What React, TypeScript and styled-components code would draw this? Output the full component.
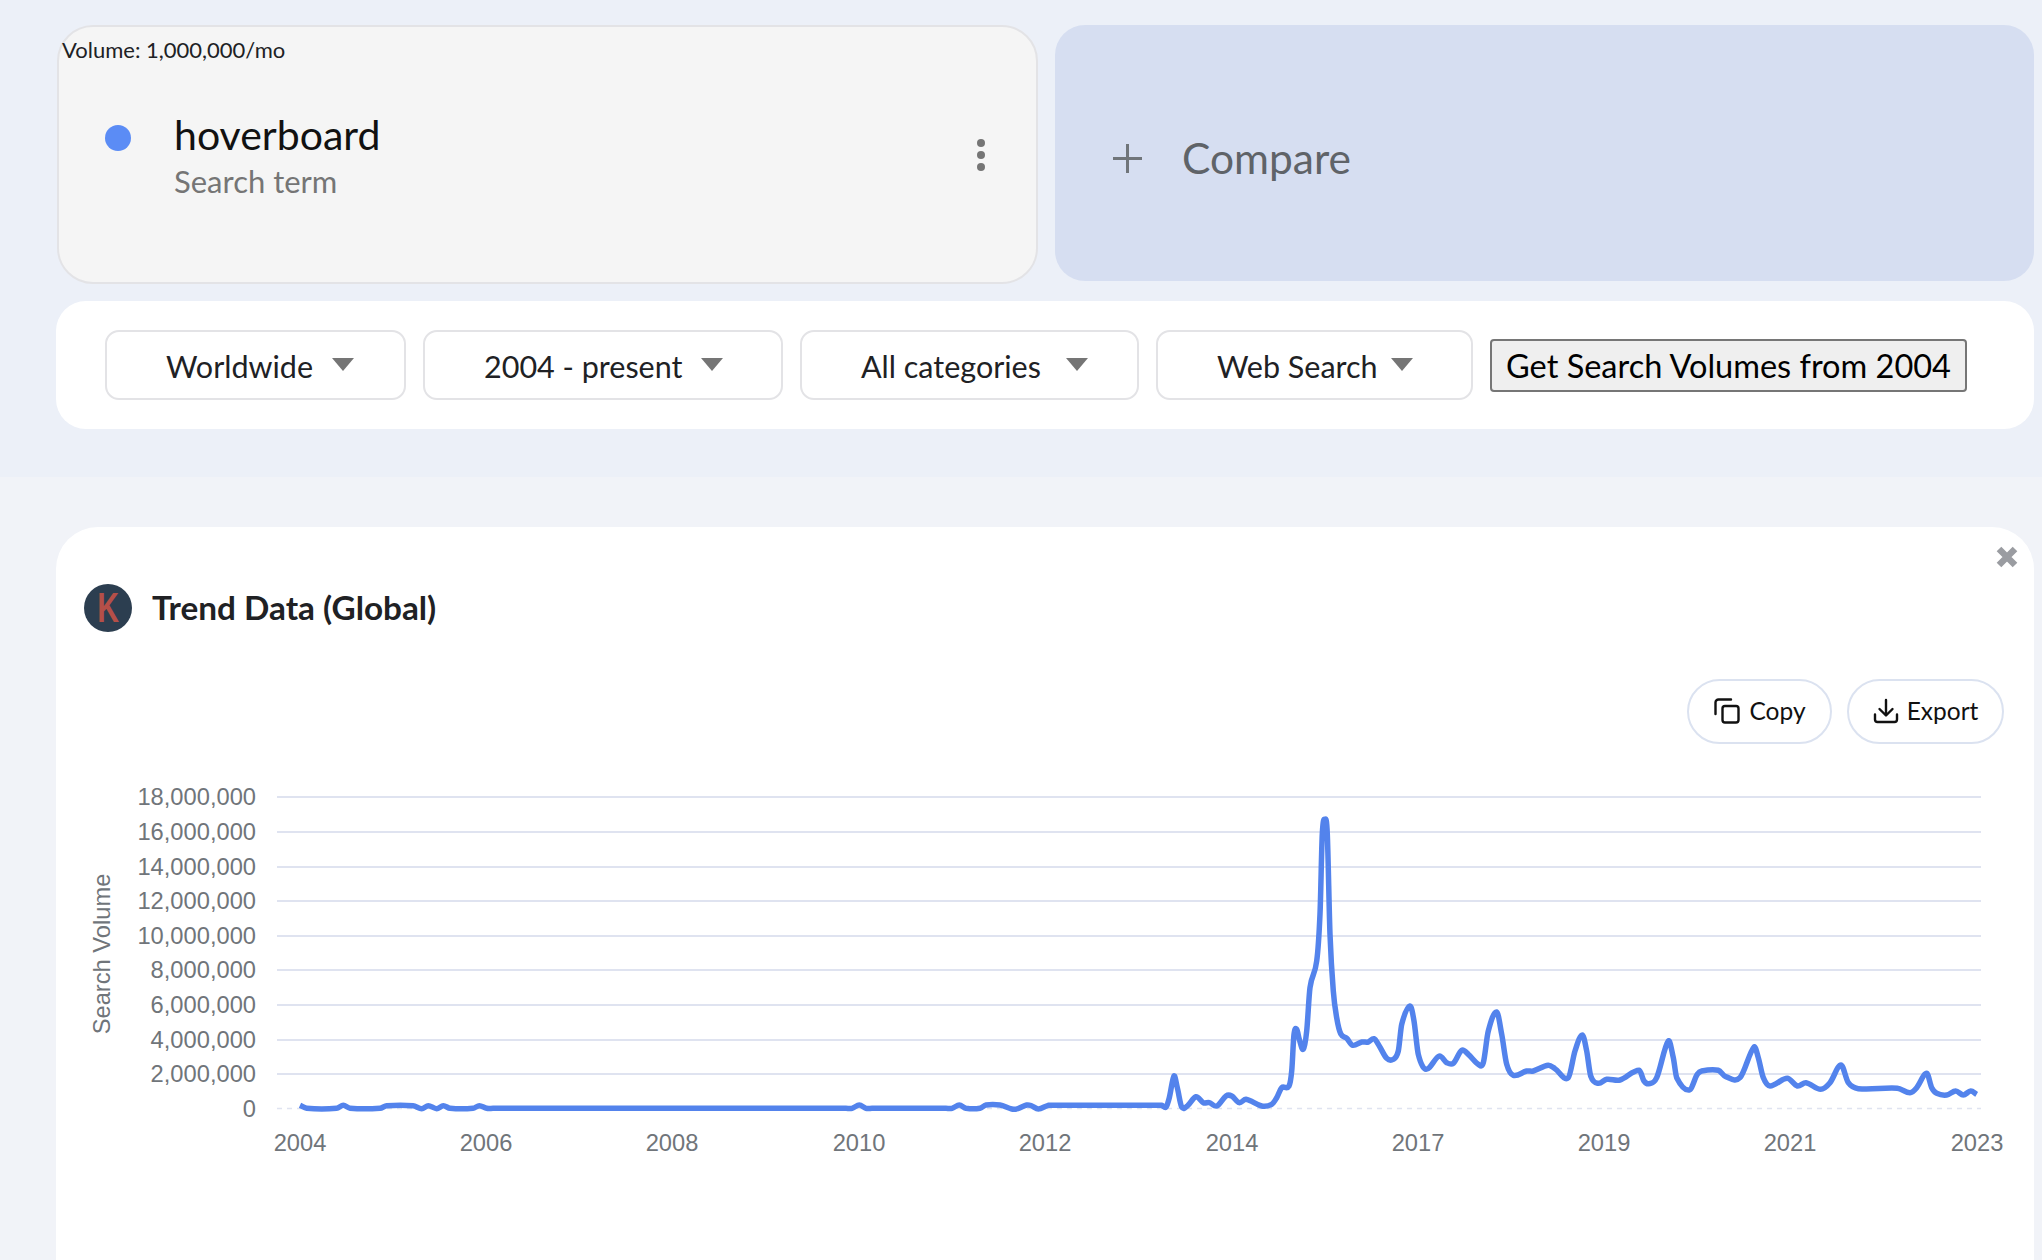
import styled, { createGlobalStyle } from "styled-components";

const GlobalStyle = createGlobalStyle`
  html, body {
    margin: 0;
    padding: 0;
    height: 1260px;
    overflow: hidden;
    background: #f1f3f8;
    font-family: "Lato", "Liberation Sans", sans-serif;
  }
  * { box-sizing: border-box; }
`;

const TopBand = styled.section`
  height: 477px;
  background: #ecf0f8;
  padding: 25px 8px 0 56px;
`;

const CardRow = styled.div`
  display: grid;
  grid-template-columns: 982px 979px;
  gap: 17px;
  align-items: start;
`;

const TermCard = styled.div`
  height: 259px;
  margin-left: 1px;
  background: #f5f5f5;
  border: 2px solid #e3e3e6;
  border-radius: 36px;
  padding: 7px 3px;
`;

const Volume = styled.div`
  font-size: 22px;
  line-height: 32px;
  color: #202124;
`;

const TermRow = styled.div`
  display: flex;
  align-items: flex-start;
  margin: 45px 0 0 43px;
`;

const Dot = styled.span`
  width: 26px;
  height: 26px;
  margin-top: 14px;
  border-radius: 50%;
  background: #5b8cf5;
`;

const TermText = styled.div`
  margin-left: 43px;
  flex: 1;
`;

const TermName = styled.div`
  font-size: 41px;
  line-height: 48px;
  color: #111;
`;

const TermKind = styled.div`
  font-size: 31px;
  line-height: 40px;
  margin-top: 2px;
  color: #757575;
`;

const Kebab = styled.div`
  display: flex;
  flex-direction: column;
  gap: 4px;
  margin: 28px 48px 0 0;

  span {
    width: 8px;
    height: 8px;
    border-radius: 50%;
    background: #757575;
  }
`;

const CompareCard = styled.div`
  height: 256px;
  display: flex;
  align-items: center;
  gap: 40px;
  padding: 8px 0 0 58px;
  background: #d6def1;
  border-radius: 30px;
  color: #5f6368;
  font-size: 42.500px;
`;

const PlusIcon = styled.svg`
  margin-top: 2px;
`;

const FilterPanel = styled.div`
  display: flex;
  align-items: center;
  gap: 17px;
  height: 128px;
  margin-top: 17px;
  padding-left: 49px;
  background: #fff;
  border-radius: 30px;
`;

const Dropdown = styled.div<{ $w: number; $pr: number }>`
  width: ${(p) => p.$w}px;
  height: 70px;
  display: flex;
  align-items: center;
  justify-content: space-between;
  padding: 1px ${(p) => p.$pr}px 0 59px;
  border: 2px solid #e3e3e6;
  border-radius: 14px;
  font-size: 30.500px;
  color: #202124;
`;

const Caret = styled.span`
  width: 0;
  height: 0;
  margin-top: -2px;
  border-left: 11px solid transparent;
  border-right: 11px solid transparent;
  border-top: 13px solid #757575;
`;

const VolumeButton = styled.button`
  width: 477px;
  height: 53px;
  padding: 0;
  background: #efefef;
  border: 2px solid #767676;
  border-radius: 4px;
  font-family: inherit;
  font-size: 32.500px;
  color: #000;
`;

const TrendCard = styled.section`
  position: relative;
  height: 733px;
  margin: 50px 8px 0 56px;
  padding: 56px 30px 0 28px;
  background: #fff;
  border-radius: 42px 42px 0 0;
`;

const CloseButton = styled.svg`
  position: absolute;
  top: 19px;
  right: 16px;
`;

const TitleRow = styled.div`
  display: flex;
  align-items: center;
  gap: 20px;
  margin-top: 1px;
`;

const Avatar = styled.div`
  width: 48px;
  height: 48px;
  display: flex;
  align-items: center;
  justify-content: center;
  border-radius: 50%;
  background: #2c3e50;
`;

const AvatarLetter = styled.span`
  color: #b54f48;
  font-size: 42px;
  line-height: 48px;
  font-weight: 700;
  font-family: "Liberation Sans", sans-serif;
  transform: scaleX(0.72);
`;

const Title = styled.h2`
  margin: -2px 0 0;
  font-size: 33.300px;
  line-height: 48px;
  font-weight: 700;
  color: #202124;
`;

const ActionRow = styled.div`
  display: flex;
  justify-content: flex-end;
  gap: 15px;
  margin-top: 46px;
  padding-top: 1px;
`;

const ActionButton = styled.button<{ $w: number; $gap: number }>`
  width: ${(p) => p.$w}px;
  height: 65px;
  display: flex;
  align-items: center;
  justify-content: center;
  gap: ${(p) => p.$gap}px;
  padding: 0 0 2px;
  background: #fff;
  border: 2px solid #dbe2f0;
  border-radius: 33px;
  font-family: inherit;
  font-size: 24.500px;
  color: #111;
`;

const ChartSvg = styled.svg`
  display: block;
  margin: 0 0 0 -28px;
  font-family: "Liberation Sans", sans-serif;
  font-size: 23.700px;
  fill: #70757a;
`;

// chart coordinates are page pixels, the svg starts at the card's left edge
const CHART_X0 = 56;
const CHART_Y0 = 743;

const yTicks = [
  ["18,000,000", 796],
  ["16,000,000", 831],
  ["14,000,000", 866],
  ["12,000,000", 900],
  ["10,000,000", 935],
  ["8,000,000", 969],
  ["6,000,000", 1004],
  ["4,000,000", 1039],
  ["2,000,000", 1073],
] as const;

const xTicks = [
  ["2004", 300],
  ["2006", 486],
  ["2008", 672],
  ["2010", 859],
  ["2012", 1045],
  ["2014", 1232],
  ["2017", 1418],
  ["2019", 1604],
  ["2021", 1790],
  ["2023", 1977],
] as const;

const trend: [number, number][] = [
  [300, 1104.3], [306.7, 1107.3], [336.7, 1107.3], [343.3, 1104.3], [350, 1107.3], [380, 1107.3],
  [386.7, 1104.7], [413, 1104.7], [421.7, 1107.7], [428.3, 1104.7], [436.7, 1107.7], [443.3, 1104.7],
  [450, 1107.3], [473, 1107.3], [479.3, 1104.7], [486.7, 1107.3], [493, 1107.3], [846, 1107.3], [852, 1107.3], [859.3, 1104],
  [866, 1107.3], [872, 1107.3], [946, 1107.3], [952, 1107.3], [959.3, 1104], [966, 1107.3], [980, 1107.3], [986, 1104], [1000, 1104],
  [1011.7, 1108], [1018, 1107.6], [1026.7, 1104], [1031, 1104.5], [1038.3, 1108], [1048.3, 1104.3], [1054, 1104.3], [1156, 1104.3], [1161.7, 1104.3],
  [1166, 1106], [1169.3, 1096.7], [1174, 1075], [1177.3, 1086.7], [1181.7, 1106], [1187.3, 1105],
  [1196, 1095.7], [1203.3, 1101.7], [1209.3, 1101.7], [1216.7, 1105], [1226, 1095], [1231.7, 1095],
  [1239.3, 1101.7], [1246, 1098.3], [1261.7, 1105], [1271.7, 1103.3], [1276.7, 1096.7], [1281.7, 1086.7],
  [1289, 1085], [1291.7, 1070], [1294, 1033.3], [1296.7, 1028.3], [1299.3, 1038.3], [1303.3, 1048.3],
  [1306.7, 1030], [1310, 986.7], [1316.7, 960], [1320, 913], [1322.3, 833], [1325, 818.3], [1327.3, 833],
  [1330, 933.3], [1333.3, 990], [1336.7, 1016.7], [1340.7, 1032.7], [1346.7, 1037.3], [1352.7, 1044.3],
  [1361.7, 1041], [1368.3, 1041], [1374, 1037.7], [1379.3, 1045], [1386.7, 1057.3], [1393.3, 1058.3],
  [1398.3, 1050], [1401.7, 1023.3], [1410, 1005], [1414, 1020], [1418.3, 1053.3], [1426, 1068.3],
  [1439.3, 1055], [1446.7, 1061.7], [1453.3, 1062.3], [1461.7, 1049.3], [1468.3, 1053.3], [1478.3, 1063.3],
  [1483.3, 1061.7], [1488.3, 1030], [1496.7, 1011], [1501.7, 1033.3], [1506.7, 1063.3], [1513.3, 1074.3],
  [1526.7, 1070], [1533.3, 1070], [1548.3, 1064.3], [1555, 1067.7], [1568.3, 1076.7], [1575, 1050],
  [1582.3, 1034], [1586.7, 1050], [1590.7, 1075], [1598.3, 1082.3], [1606.7, 1078.3], [1620, 1079],
  [1639.3, 1069.3], [1644, 1080], [1649.3, 1082.7], [1656.7, 1076.7], [1668.3, 1040], [1673.3, 1056.7],
  [1676.7, 1076.7], [1689.3, 1089], [1697.3, 1073.3], [1701.7, 1070], [1718.3, 1069.3], [1725.7, 1075.7],
  [1740, 1076.7], [1754, 1046], [1758.3, 1056.7], [1763.3, 1076.7], [1770, 1085], [1787.3, 1077.3],
  [1797.3, 1085], [1806, 1081.7], [1820.7, 1088.3], [1830, 1081.7], [1841, 1064], [1848.3, 1081.7],
  [1858.3, 1087.7], [1897.3, 1087.3], [1910, 1091.7], [1916.7, 1086.7], [1926.7, 1072.3], [1931.7, 1086.7],
  [1936.7, 1092.3], [1946.7, 1094], [1955.7, 1090], [1963.3, 1094], [1970.7, 1090], [1976.7, 1093.3],
];

// smooth curve through the traced points, x control points kept inside each segment
const smoothPath = (pts: [number, number][]) => {
  const slope = (i: number) => {
    const a = pts[Math.max(i - 1, 0)];
    const b = pts[Math.min(i + 1, pts.length - 1)];
    return (b[1] - a[1]) / (b[0] - a[0]);
  };
  let d = `M${pts[0][0]} ${pts[0][1]}`;
  for (let i = 0; i < pts.length - 1; i++) {
    const [x1, y1] = pts[i];
    const [x2, y2] = pts[i + 1];
    const dx = (x2 - x1) / 3;
    d += `C${(x1 + dx).toFixed(1)} ${(y1 + slope(i) * dx).toFixed(1)} ${(x2 - dx).toFixed(1)} ${(y2 - slope(i + 1) * dx).toFixed(1)} ${x2} ${y2}`;
  }
  return d;
};

const TrendChart = () => (
  <ChartSvg
    width={1978}
    height={480}
    viewBox={`${CHART_X0} ${CHART_Y0} 1978 480`}
  >
    {yTicks.map(([label, y]) => (
      <g key={label}>
        <line x1={277} x2={1981} y1={y} y2={y} stroke="#dfe3f0" strokeWidth={2} />
        <text x={256} y={y + 8} textAnchor="end">{label}</text>
      </g>
    ))}
    <line x1={277} x2={1981} y1={1107.5} y2={1107.5} stroke="#dfe3f0" strokeWidth={1.5} strokeDasharray="5 5" />
    <text x={256} y={1116} textAnchor="end">0</text>
    <text transform="translate(110 953) rotate(-90)" textAnchor="middle">Search Volume</text>
    {xTicks.map(([label, x]) => (
      <text key={label} x={x} y={1150} textAnchor="middle">{label}</text>
    ))}
    <path d={smoothPath(trend)} fill="none" stroke="#5383ec" strokeWidth={5.500} strokeLinejoin="round" />
  </ChartSvg>
);

const CopyIcon = () => (
  <svg width="28" height="28" viewBox="0 0 28 28" fill="none" stroke="#111" strokeWidth="2.400" strokeLinecap="round" strokeLinejoin="round">
    <rect x="9.500" y="9" width="16" height="16.500" rx="2.500" />
    <path d="M18 2.500H5.500a3 3 0 0 0-3 3V17" />
  </svg>
);

const ExportIcon = () => (
  <svg width="26" height="26" viewBox="0 0 26 26" fill="none" stroke="#111" strokeWidth="2.400" strokeLinecap="round" strokeLinejoin="round">
    <path d="M13 2v15M6.500 11l6.500 6.500L19.500 11" />
    <path d="M2 16.500v5a2.500 2.500 0 0 0 2.500 2.500h17a2.500 2.500 0 0 0 2.500-2.500v-5" />
  </svg>
);

const App = () => (
  <>
    <GlobalStyle />
    <TopBand>
      <CardRow>
        <TermCard>
          <Volume>Volume: 1,000,000/mo</Volume>
          <TermRow>
            <Dot />
            <TermText>
              <TermName>hoverboard</TermName>
              <TermKind>Search term</TermKind>
            </TermText>
            <Kebab>
              <span />
              <span />
              <span />
            </Kebab>
          </TermRow>
        </TermCard>
        <CompareCard>
          <PlusIcon width="29" height="29" viewBox="0 0 29 29" stroke="#70757a" strokeWidth="3">
            <path d="M14.500 0v29M0 14.500h29" />
          </PlusIcon>
          Compare
        </CompareCard>
      </CardRow>
      <FilterPanel>
        <Dropdown $w={301} $pr={50}>Worldwide<Caret /></Dropdown>
        <Dropdown $w={360} $pr={58}>2004 - present<Caret /></Dropdown>
        <Dropdown $w={339} $pr={49}>All categories<Caret /></Dropdown>
        <Dropdown $w={317} $pr={58}>Web Search<Caret /></Dropdown>
        <VolumeButton>Get Search Volumes from 2004</VolumeButton>
      </FilterPanel>
    </TopBand>
    <TrendCard>
      <CloseButton width="22" height="22" viewBox="0 0 22 22" stroke="#9a9ca1" strokeWidth="6.500">
        <path d="M3 3l16 16M19 3L3 19" />
      </CloseButton>
      <TitleRow>
        <Avatar><AvatarLetter>K</AvatarLetter></Avatar>
        <Title>Trend Data (Global)</Title>
      </TitleRow>
      <ActionRow>
        <ActionButton $w={145} $gap={8}><CopyIcon />Copy</ActionButton>
        <ActionButton $w={157} $gap={8}><ExportIcon />Export</ActionButton>
      </ActionRow>
      <TrendChart />
    </TrendCard>
  </>
);

export default App;
